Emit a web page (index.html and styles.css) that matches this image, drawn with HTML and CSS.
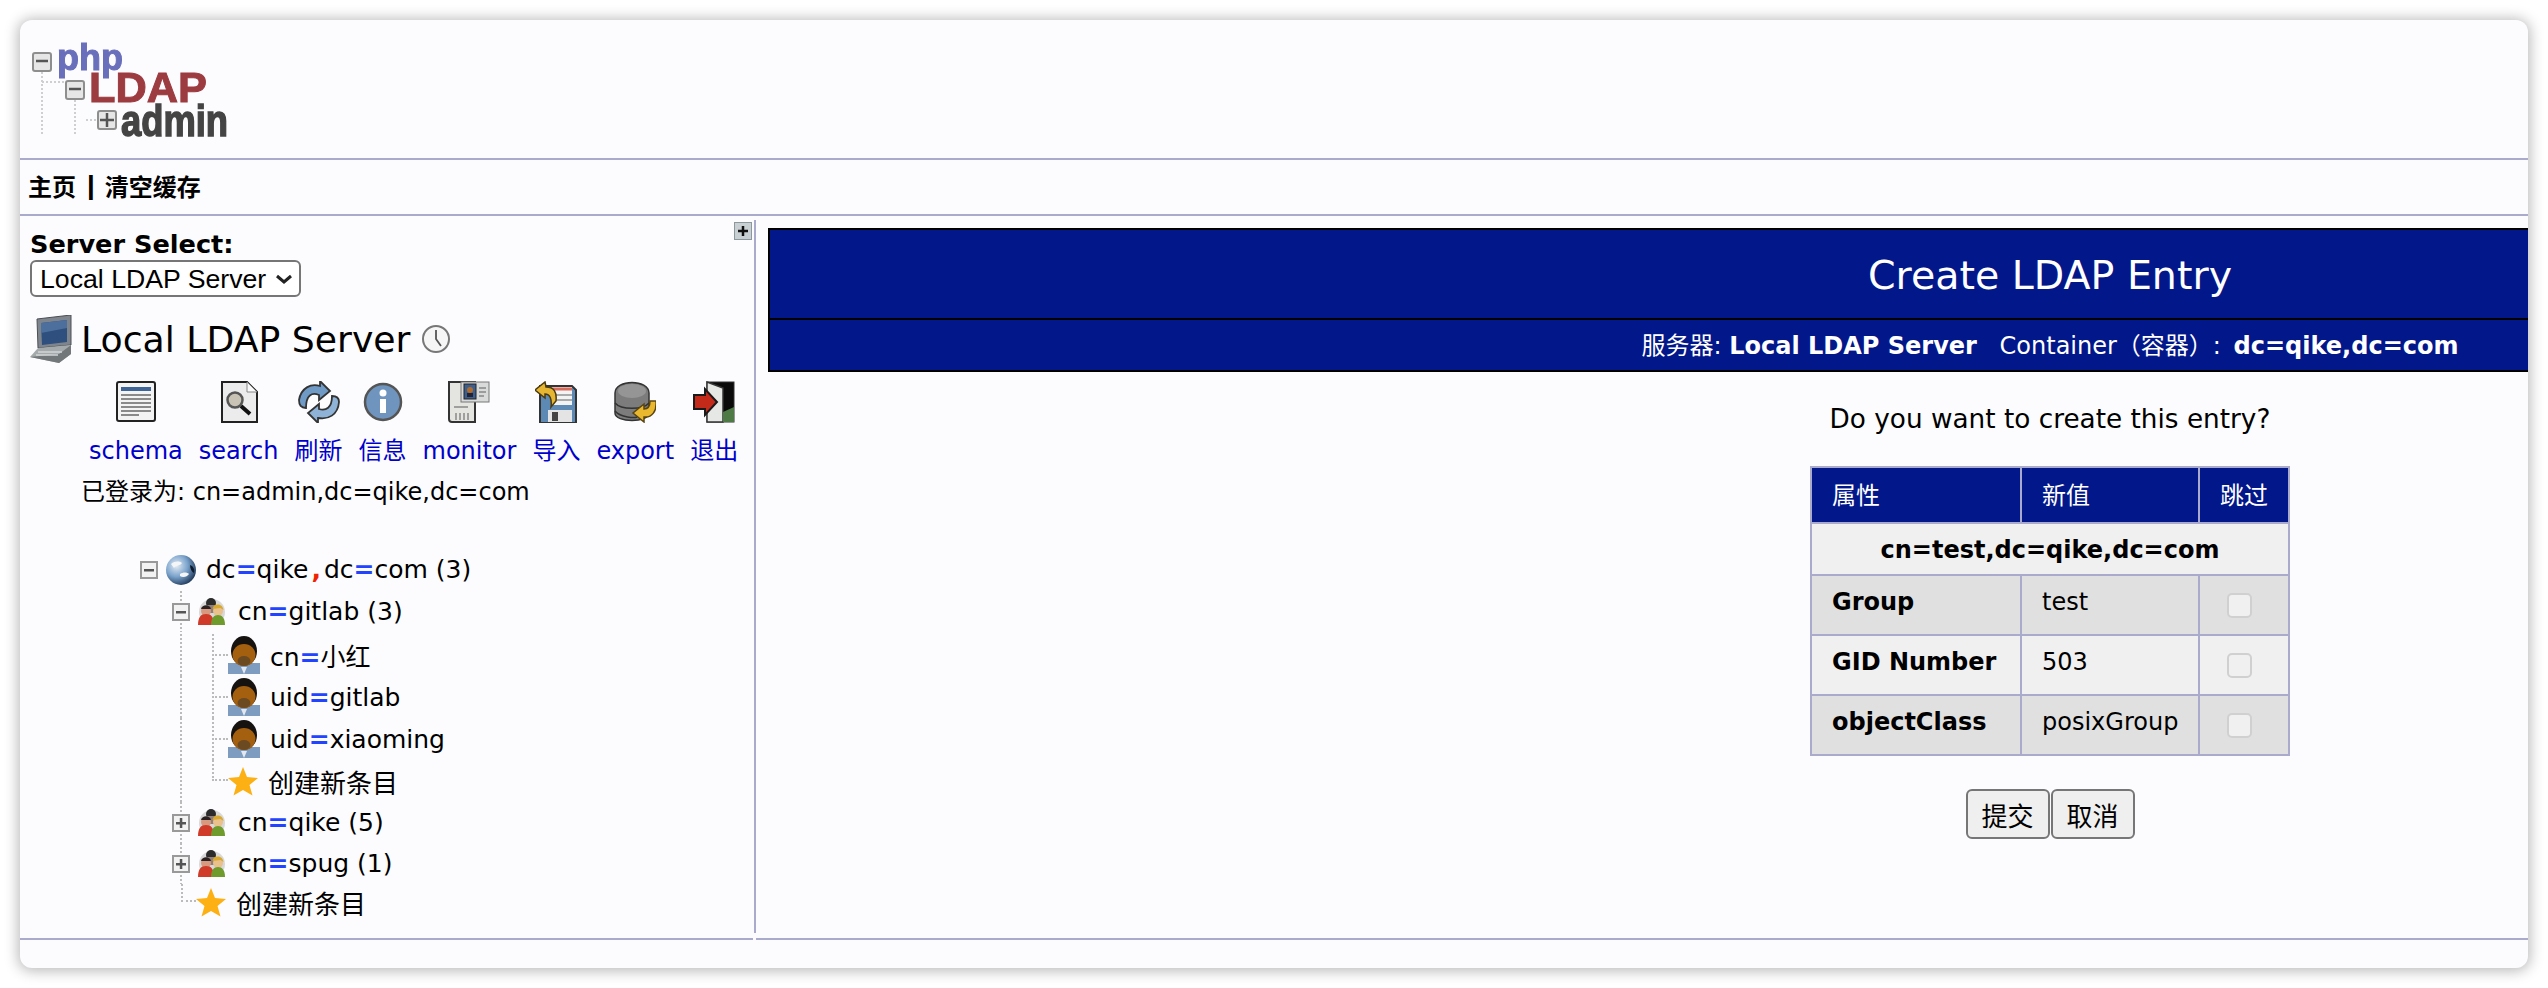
FILE: index.html
```html
<!DOCTYPE html>
<html>
  <head>
    <title>phpLDAPadmin</title>
    <link rel="stylesheet" href="styles.css">
  </head>
  <body>
    <svg class="sprite" xmlns="http://www.w3.org/2000/svg">
      <defs>
        <radialGradient id="globeFill" cx="35%" cy="35%" r="75%">
          <stop offset="0" stop-color="#e6edf5"/>
          <stop offset=".5" stop-color="#7aa3cc"/>
          <stop offset="1" stop-color="#152c4c"/>
        </radialGradient>
        <symbol id="person" viewBox="0 0 32 38">
          <path d="M0 38V27h32v11z" fill="#7d9cc0"/>
          <path d="M13 31l3 7 3-7z" fill="#e4e8ee"/>
          <ellipse cx="16" cy="15" rx="13" ry="15" fill="#151210"/>
          <ellipse cx="16" cy="19" rx="11.500" ry="11" fill="#a5600f"/>
          <ellipse cx="16" cy="25" rx="6.500" ry="5" fill="#6b4a22"/>
        </symbol>
        <symbol id="star" viewBox="0 0 30 30">
          <path d="M15 1l4 10 11 1-8.500 7 3 10.500L15 24l-9.500 5.500 3-10.500L0 12l11-1z" fill="#fdb013"/>
        </symbol>
        <symbol id="group" viewBox="0 0 28 28">
          <circle cx="14" cy="14" r="13" fill="#d8d8d8"/>
          <circle cx="13" cy="5" r="5" fill="#2b2b2b"/>
          <path d="M9 7h9v8H9z" fill="#8f7f78"/>
          <circle cx="8" cy="13" r="5" fill="#d79a80"/>
          <path d="M3 11c1-5 9-5 10 0z" fill="#2a2222"/>
          <path d="M0 27c0-8 3-11 8-11s8 3 8 11z" fill="#cf3b28"/>
          <circle cx="20" cy="13" r="5" fill="#eac08d"/>
          <path d="M14.500 11c1-6 10-6 11 1l-3-2z" fill="#d9a92e"/>
          <path d="M13 27c0-7 3-10 7-10s7 3 7 10z" fill="#6f9a2c"/>
        </symbol>
        <symbol id="minus" viewBox="0 0 18 18">
          <rect x="1" y="1" width="16" height="16" fill="#f2f2f2" stroke="#999999" stroke-width="2"/>
          <rect x="4" y="8" width="10" height="2.500" fill="#555"/>
        </symbol>
        <symbol id="plus" viewBox="0 0 18 18">
          <rect x="1" y="1" width="16" height="16" fill="#f2f2f2" stroke="#999999" stroke-width="2"/>
          <rect x="4" y="8" width="10" height="2.500" fill="#555"/>
          <rect x="7.800" y="4" width="2.500" height="10" fill="#555"/>
        </symbol>
      </defs>
    </svg>

    <div class="window">
      <header class="top">
        <svg class="logo" viewBox="0 -12 200 116" width="200" height="116" xmlns="http://www.w3.org/2000/svg">
          <path d="M10 28v64M43 56v36M20 38h-2M10 38h24M54 76h12" fill="none" stroke="#cfcfcf" stroke-width="2" stroke-dasharray="2 2"/>
          <g fill="#e6e6e6" stroke="#8e8e8e" stroke-width="2">
            <rect x="1" y="9" width="18" height="18" rx="2"/>
            <rect x="34" y="37" width="18" height="18" rx="2"/>
            <rect x="66" y="67" width="18" height="18" rx="2"/>
          </g>
          <path d="M4 17h12M37 45h12M68 76h14M75 69v14" stroke="#555" stroke-width="2.500"/>
          <text class="logo-php" x="25" y="26" textLength="66" lengthAdjust="spacingAndGlyphs">php</text>
          <text class="logo-ldap" x="57" y="58" textLength="118" lengthAdjust="spacingAndGlyphs">LDAP</text>
          <text class="logo-admin" x="89" y="92" textLength="107" lengthAdjust="spacingAndGlyphs">admin</text>
        </svg>
      </header>

      <nav class="menu">
        <a>主页</a><span class="menu-sep">|</span><a>清空缓存</a>
      </nav>

      <div class="body-row">
        <aside class="left">
          <div class="select-head">
            <div class="server-label">Server Select:</div>
            <svg class="expand" viewBox="0 0 18 18" width="18" height="18" xmlns="http://www.w3.org/2000/svg">
              <rect x=".5" y=".5" width="17" height="17" fill="#c9d0d4" stroke="#8d989e"/>
              <path d="M4 9h10M9 4v10" stroke="#111" stroke-width="2.500"/>
            </svg>
          </div>
          <select class="server-select">
            <option>Local LDAP Server</option>
          </select>

          <div class="server-title">
            <svg class="server-icon" viewBox="0 0 42 48" width="42" height="48" xmlns="http://www.w3.org/2000/svg">
              <path d="M7 4l34-4v30L8 33z" fill="#7f858c" stroke="#4b4f54"/>
              <path d="M11 8l26-3v22l-25 3z" fill="#2f4f7e"/>
              <path d="M11 8l26-3v8l-26 5z" fill="#4d6f9e"/>
              <path d="M8 33l33-3v9l-12 9L0 42z" fill="#a4a9ab"/>
              <path d="M0 42l29-3 12-9v9L29 48z" fill="#72777a"/>
              <path d="M8 37h24M6 40h22" stroke="#d2d5d6" stroke-width="1.500"/>
            </svg>
            <h2>Local LDAP Server</h2>
            <svg class="clock" viewBox="0 0 28 28" width="28" height="28" xmlns="http://www.w3.org/2000/svg">
              <circle cx="14" cy="14" r="13" fill="#f6f6f6" stroke="#777" stroke-width="2"/>
              <path d="M14 5v9l5 7" fill="none" stroke="#555" stroke-width="1.800"/>
            </svg>
          </div>

          <div class="tools">
            <a class="tool">
              <svg viewBox="0 0 42 42" width="42" height="42" xmlns="http://www.w3.org/2000/svg">
                <rect x="2" y="1" width="38" height="39" rx="2" fill="#f3f3f3" stroke="#222" stroke-width="2"/>
                <rect x="6" y="6" width="30" height="4" fill="#3f6596"/>
                <path d="M6 14h30M6 18h30M6 22h30M6 26h30M6 30h30M6 34h18" stroke="#8a8a8a" stroke-width="2"/>
              </svg>
              schema
            </a>
            <a class="tool">
              <svg viewBox="0 0 42 42" width="42" height="42" xmlns="http://www.w3.org/2000/svg">
                <path d="M4 1h25l10 10v30H4z" fill="#ececec" stroke="#222" stroke-width="2"/>
                <path d="M29 1v10h10z" fill="#fafafa" stroke="#888"/>
                <circle cx="17" cy="19" r="7.500" fill="#c8c3b5" stroke="#555" stroke-width="2.500"/>
                <path d="M23 25l9 8" stroke="#111" stroke-width="4"/>
              </svg>
              search
            </a>
            <a class="tool">
              <svg viewBox="0 0 42 42" width="42" height="42" xmlns="http://www.w3.org/2000/svg">
                <path d="M1 19C3 7 13 2 22 5l0-5 10 10-11 9 0-5C14 11 8 14 8 27 3 27 1 24 1 19z" fill="#6f9ac6" stroke="#333" stroke-width="1.800"/>
                <path d="M41 21c-1 13-11 18-21 16l0 5-10-10 11-9 0 5c7 2 13-1 13-13 5 0 7 2 7 6z" fill="#8fb3d6" stroke="#333" stroke-width="1.800"/>
              </svg>
              刷新
            </a>
            <a class="tool">
              <svg viewBox="0 0 42 42" width="42" height="42" xmlns="http://www.w3.org/2000/svg">
                <circle cx="21" cy="21" r="18" fill="#6f94bd" stroke="#555" stroke-width="2.500"/>
                <circle cx="21" cy="12" r="3.500" fill="#fff"/>
                <path d="M21 18v14" stroke="#fff" stroke-width="6"/>
              </svg>
              信息
            </a>
            <a class="tool">
              <svg viewBox="0 0 42 42" width="42" height="42" xmlns="http://www.w3.org/2000/svg">
                <path d="M1 1h26v40H4q-3 0-3-3z" fill="#e4e4e0" stroke="#333" stroke-width="2"/>
                <rect x="13" y="1" width="28" height="20" fill="#d8dbd9" stroke="#777"/>
                <rect x="16" y="3" width="12" height="15" fill="#3c5f8e" stroke="#222"/>
                <circle cx="22" cy="9" r="3" fill="#b06c2c"/>
                <rect x="19" y="12" width="6" height="4" fill="#223"/>
                <path d="M31 7h7M31 11h7M31 15h5M6 26h14M8 32v7M12 32v7M16 32v7M20 32v7" stroke="#888" stroke-width="1.500"/>
              </svg>
              monitor
            </a>
            <a class="tool">
              <svg viewBox="0 0 42 42" width="42" height="42" xmlns="http://www.w3.org/2000/svg">
                <path d="M5 5h32l4 4v33H5z" fill="#5d89b5" stroke="#333" stroke-width="2"/>
                <rect x="17" y="6" width="20" height="18" fill="#f3f3f3"/>
                <path d="M17 8h20" stroke="#d96a5a" stroke-width="3"/>
                <path d="M17 14h20M17 19h20" stroke="#aaa" stroke-width="2"/>
                <rect x="13" y="29" width="24" height="12" fill="#e4e4e4"/>
                <rect x="17" y="31" width="6" height="9" fill="#444"/>
                <path d="M0 9l10-8 1 5c8 0 11 5 10 14l-5 6c1-8-1-13-6-13l0 4z" fill="#e6b532" stroke="#4a3a10" stroke-width="1.500"/>
              </svg>
              导入
            </a>
            <a class="tool">
              <svg viewBox="0 0 42 42" width="42" height="42" xmlns="http://www.w3.org/2000/svg">
                <path d="M1 12c0-14 34-14 34 0v20c0 10-34 10-34 0z" fill="#7c7c7c" stroke="#333" stroke-width="1.500"/>
                <path d="M1 22c6 7 28 7 34 0M1 30c6 7 20 7 22 6" fill="none" stroke="#333" stroke-width="1.500"/>
                <ellipse cx="18" cy="10" rx="14" ry="7" fill="#959595"/>
                <path d="M42 20c1 10-4 17-12 16l0 5-11-9 11-9 0 5c4 0 6-3 6-8z" fill="#eab82f" stroke="#5a4510" stroke-width="1.500"/>
              </svg>
              export
            </a>
            <a class="tool">
              <svg viewBox="0 0 42 42" width="42" height="42" xmlns="http://www.w3.org/2000/svg">
                <rect x="14" y="1" width="27" height="40" fill="#0a0a0a" stroke="#333"/>
                <path d="M14 1l16 6v34H14z" fill="#e6e8e6" stroke="#333" stroke-width="1.500"/>
                <path d="M30 31l11-5v15H30z" fill="#4d7a45"/>
                <path d="M1 14h11V8l12 13-12 13v-6H1z" fill="#c32a1a" stroke="#1a1a1a" stroke-width="2"/>
              </svg>
              退出
            </a>
          </div>

          <div class="logged">已登录为: cn=admin,dc=qike,dc=com</div>

          <div class="tree">
            <div class="row row-root">
              <svg class="box"><use href="#minus"/></svg>
              <svg class="globe" viewBox="0 0 30 30">
                <circle cx="15" cy="15" r="15" fill="url(#globeFill)"/>
                <path d="M5 9c4-3 8-3 11-1-2 3-6 2-8 5zM14 19c3-2 7-2 9 0-2 3-6 4-9 2z" fill="#f4f6f8"/>
                <path d="M24 10c3 1 5 4 4 8-2-1-4-4-4-8z" fill="#0d1a2c"/>
              </svg>
              <span>dc<b>=</b>qike<i>,</i>dc<b>=</b>com (3)</span>
            </div>
            <div class="row row-branch row-open">
              <span class="stem"><svg class="box"><use href="#minus"/></svg></span>
              <svg class="group"><use href="#group"/></svg>
              <span>cn<b>=</b>gitlab (3)</span>
            </div>
            <div class="row row-leaf">
              <span class="guide"></span><span class="elbow"></span>
              <svg class="person"><use href="#person"/></svg>
              <span>cn<b>=</b>小红</span>
            </div>
            <div class="row row-leaf">
              <span class="guide"></span><span class="elbow"></span>
              <svg class="person"><use href="#person"/></svg>
              <span>uid<b>=</b>gitlab</span>
            </div>
            <div class="row row-leaf">
              <span class="guide"></span><span class="elbow"></span>
              <svg class="person"><use href="#person"/></svg>
              <span>uid<b>=</b>xiaoming</span>
            </div>
            <div class="row row-leaf">
              <span class="guide"></span><span class="elbow elbow-end"></span>
              <svg class="star"><use href="#star"/></svg>
              <span class="create">创建新条目</span>
            </div>
            <div class="row row-branch">
              <span class="stem"><svg class="box"><use href="#plus"/></svg></span>
              <svg class="group"><use href="#group"/></svg>
              <span>cn<b>=</b>qike (5)</span>
            </div>
            <div class="row row-branch">
              <span class="stem"><svg class="box"><use href="#plus"/></svg></span>
              <svg class="group"><use href="#group"/></svg>
              <span>cn<b>=</b>spug (1)</span>
            </div>
            <div class="row row-create">
              <span class="elbow elbow-end elbow-short"></span>
              <svg class="star"><use href="#star"/></svg>
              <span class="create">创建新条目</span>
            </div>
          </div>
        </aside>

        <div class="divider"></div>

        <main class="main">
          <div class="content">
            <div class="banner">
              <h3 class="banner-title">Create LDAP Entry</h3>
              <div class="banner-sub">服务器: <strong class="banner-server">Local LDAP Server</strong> <span class="banner-gap">Container（容器）:</span> <strong>dc=qike,dc=com</strong></div>
            </div>

            <p class="question">Do you want to create this entry?</p>

            <table class="confirm">
              <colgroup>
                <col class="col-attr"><col class="col-value"><col class="col-skip">
              </colgroup>
              <thead>
                <tr><th>属性</th><th>新值</th><th>跳过</th></tr>
              </thead>
              <tbody>
                <tr class="dn"><td colspan="3">cn=test,dc=qike,dc=com</td></tr>
                <tr class="odd"><td class="attr">Group</td><td>test</td><td class="skip"><input type="checkbox" disabled></td></tr>
                <tr class="even"><td class="attr">GID Number</td><td>503</td><td class="skip"><input type="checkbox" disabled></td></tr>
                <tr class="odd"><td class="attr">objectClass</td><td>posixGroup</td><td class="skip"><input type="checkbox" disabled></td></tr>
              </tbody>
            </table>

            <div class="actions">
              <button>提交</button><button>取消</button>
            </div>
          </div>
        </main>
      </div>

      <footer class="bottom">
        <div class="bottom-left"></div>
        <div class="bottom-right"></div>
      </footer>
    </div>
  </body>
</html>
```

FILE: styles.css
```css
body {
  margin: 0;
  height: 988px;
  overflow: hidden;
  background-color: #ffffff;
  color: #000000;
  font-family: "DejaVu Sans", "Noto Sans CJK SC", sans-serif;
  font-size: 24px;
}
.sprite {
  display: block;
  width: 0;
  height: 0;
}
.window {
  display: flex;
  flex-direction: column;
  box-sizing: border-box;
  width: 2508px;
  height: 948px;
  margin: 20px;
  overflow: hidden;
  background-color: #fcfcff;
  border-radius: 12px;
  box-shadow: 0 1px 14px 2px rgba(0, 0, 0, 0.28);
}
.top {
  box-sizing: border-box;
  height: 140px;
  padding: 12px 0 0 12px;
  border-bottom: 2px solid #aaaacc;
}
.logo {
  display: block;
  filter: blur(0.6px);
}
.logo-php {
  font: bold 36px "Liberation Sans", sans-serif;
  fill: #6a6fbb;
  stroke: #6a6fbb;
  stroke-width: 1px;
}
.logo-ldap {
  font: bold 42px "Liberation Sans", sans-serif;
  fill: #9c3b40;
  stroke: #9c3b40;
  stroke-width: 1px;
}
.logo-admin {
  font: bold 44px "Liberation Sans", sans-serif;
  fill: #444444;
  stroke: #444444;
  stroke-width: 1.5px;
}
.menu {
  box-sizing: border-box;
  display: flex;
  align-items: center;
  height: 56px;
  padding: 0 0 3px 8px;
  border-bottom: 2px solid #aaaacc;
  font-family: "Noto Sans CJK SC", sans-serif;
  font-weight: bold;
}
.menu-sep {
  margin: 0 10px;
  font-family: "DejaVu Sans", sans-serif;
  text-shadow: 1px 0 0 #000000;
}
.body-row {
  display: flex;
  height: 722px;
}
.left {
  box-sizing: border-box;
  width: 734px;
  flex: none;
  padding: 6px 2px 0 10px;
}
.select-head {
  display: flex;
  justify-content: space-between;
  align-items: flex-start;
}
.server-label {
  margin-top: 9px;
  font-size: 25.6px;
  font-weight: bold;
  line-height: 27px;
}
.expand {
  display: block;
}
.server-select {
  appearance: none;
  display: block;
  box-sizing: border-box;
  width: 271px;
  height: 37px;
  margin-top: 2px;
  padding: 0 0 0 8px;
  background: #ffffff url("data:image/svg+xml,%3Csvg xmlns='http://www.w3.org/2000/svg' width='18' height='10'%3E%3Cpath d='M2 2l7 6 7-6' fill='none' stroke='%23222' stroke-width='3'/%3E%3C/svg%3E") no-repeat right 6px center;
  border: 2px solid #767676;
  border-radius: 6px;
  color: #000000;
  font-family: "Liberation Sans", sans-serif;
  font-size: 26.67px;
}
.server-title {
  display: flex;
  align-items: center;
  height: 50px;
  margin-top: 17px;
}
.server-title h2 {
  margin: 0 12px 0 9px;
  font-size: 36.2px;
  font-weight: normal;
}
.server-icon,
.clock,
.tool svg,
.globe,
.group,
.person,
.star {
  filter: blur(0.5px);
}
.tools {
  display: flex;
  gap: 16px;
  margin-top: 17px;
  padding-left: 59px;
}
.tool {
  display: flex;
  flex-direction: column;
  align-items: center;
  color: #0000cc;
  line-height: 34px;
}
.tool svg {
  margin-bottom: 11px;
}
.logged {
  margin-top: 7px;
  padding-left: 51px;
  line-height: 34px;
}
.tree {
  margin-top: 39px;
  font-size: 25px;
}
.create {
  font-size: 26px;
}
.row {
  display: flex;
  align-items: center;
  height: 41px;
  white-space: nowrap;
}
.row b {
  color: #2244ff;
  font-weight: bold;
}
.row i {
  margin: 0 3px;
  color: #ee2200;
  font-weight: bold;
  font-style: normal;
}
.box {
  display: block;
  width: 18px;
  height: 18px;
}
.row-root {
  height: 43px;
  padding-left: 110px;
}
.globe {
  width: 30px;
  height: 30px;
  margin: 0 10px 0 8px;
}
.row-branch {
  padding-left: 142px;
}
.row-open {
  margin-bottom: 2px;
}
.stem {
  display: flex;
  align-items: center;
  align-self: stretch;
  background: repeating-linear-gradient(#bbbbbb 0 2px, transparent 2px 4px) center / 2px 100% no-repeat;
}
.group {
  width: 28px;
  height: 28px;
  margin: 0 12px 0 8px;
}
.row-leaf {
  height: 42px;
  padding-left: 150px;
}
.guide {
  align-self: stretch;
  width: 32px;
  background: repeating-linear-gradient(#bbbbbb 0 2px, transparent 2px 4px) left / 2px 100% no-repeat;
}
.elbow {
  display: flex;
  align-items: center;
  align-self: stretch;
  width: 16px;
  background: repeating-linear-gradient(#bbbbbb 0 2px, transparent 2px 4px) left / 2px 100% no-repeat;
}
.elbow::after {
  content: "";
  width: 100%;
  border-top: 2px dotted #bbbbbb;
}
.elbow-end {
  align-self: flex-start;
  align-items: flex-end;
  height: 50%;
}
.person {
  width: 32px;
  height: 38px;
  margin-right: 10px;
}
.star {
  width: 30px;
  height: 30px;
  margin-right: 10px;
}
.row-create {
  height: 36px;
  padding-left: 151px;
}
.elbow-short {
  width: 15px;
}
.divider {
  flex: none;
  width: 2px;
  margin: 4px 0 5px;
  background-color: #aaaacc;
}
.main {
  flex: 1;
  min-width: 0;
  overflow: hidden;
  padding: 12px 0 0 12px;
}
.content {
  display: flex;
  flex-direction: column;
  align-items: center;
  width: 2564px;
}
.banner {
  box-sizing: border-box;
  width: 100%;
  background-color: #02178a;
  border: 2px solid #000000;
  color: #ffffff;
  text-align: center;
}
.banner-title {
  box-sizing: border-box;
  height: 90px;
  margin: 0;
  padding-top: 3px;
  border-bottom: 2px solid #000000;
  font-size: 39.5px;
  font-weight: normal;
  line-height: 85px;
}
.banner-sub {
  box-sizing: border-box;
  height: 50px;
  padding-top: 2px;
  line-height: 48px;
}
.banner-server {
  margin-right: 1px;
}
.banner-gap {
  margin: 0 5px 0 14px;
}
.question {
  margin: 30px 0 0;
  font-size: 26.3px;
  line-height: 34px;
}
.confirm {
  width: 480px;
  margin-top: 30px;
  border-collapse: collapse;
  table-layout: fixed;
  border: 2px solid #aaaacc;
}
.col-attr {
  width: 210px;
}
.col-value {
  width: 178px;
}
.confirm th,
.confirm td {
  box-sizing: border-box;
  padding: 0 0 0 20px;
  border: 2px solid #aaaacc;
  text-align: left;
}
.confirm th {
  height: 56px;
  padding-bottom: 3px;
  background-color: #02178a;
  color: #ffffff;
  font-weight: normal;
}
.confirm .dn td {
  height: 52px;
  padding: 2px 0 0;
  background-color: #f0f0f0;
  font-weight: bold;
  text-align: center;
}
.odd td,
.even td {
  height: 60px;
  padding-bottom: 6px;
}
.odd td {
  background-color: #e0e0e0;
}
.even td {
  background-color: #f0f0f0;
}
.confirm .attr {
  font-weight: bold;
}
.confirm .skip {
  padding: 0;
  text-align: center;
}
.skip input {
  appearance: none;
  display: block;
  box-sizing: border-box;
  width: 25px;
  height: 25px;
  margin: 0 0 0 27px;
  background-color: #f0f0f0;
  border: 2px solid #d0d0d0;
  border-radius: 5px;
}
.actions {
  display: flex;
  gap: 1px;
  margin-top: 33px;
}
.actions button {
  box-sizing: border-box;
  width: 84px;
  height: 50px;
  padding: 0;
  background-color: #efefef;
  border: 2px solid #767676;
  border-radius: 6px;
  color: #000000;
  font-family: "Noto Sans CJK SC", sans-serif;
  font-size: 26px;
}
.bottom {
  display: flex;
  gap: 3px;
}
.bottom-left {
  width: 733px;
  border-top: 2px solid #aaaacc;
}
.bottom-right {
  flex: 1;
  border-top: 2px solid #aaaacc;
}
```
